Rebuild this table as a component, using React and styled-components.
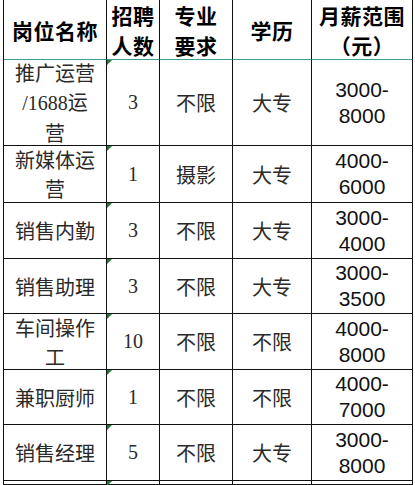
import React from "react";
import styled, { createGlobalStyle } from "styled-components";

// ============ CSS ============== //
const Global = createGlobalStyle`
  html, body {
    margin: 0;
    padding: 0;
    background: #ffffff;
  }
`;

const Sheet = styled.div`
  width: 415px;
  height: 485px;
  overflow: hidden;
  padding-left: 3px;
  box-sizing: border-box;
`;

const Grid = styled.div`
  display: grid;
  grid-template-columns: 103px 53px 73px 79px 101px;
  border-left: 1px solid #111;
  width: 410px;
`;

const Cell = styled.div`
  position: relative;
  box-sizing: border-box;
  height: ${(p) => p.$h}px;
  border-right: 1px solid #111;
  border-bottom: 1px solid ${(p) => (p.$head ? "#3a9e92" : "#111")};
  display: flex;
  flex-direction: column;
  align-items: center;
  justify-content: center;
  text-align: center;
  color: #2a2a2a;
  font-family: "Noto Sans CJK SC", "Noto Sans", sans-serif;
  font-size: 20px;
  line-height: 29px;

  ${(p) =>
    p.$flag &&
    `
    &::before {
      content: "";
      position: absolute;
      top: 0;
      left: 0;
      border-top: 5px solid #1f7a2e;
      border-right: 5px solid transparent;
    }
  `}
`;

const HeadText = styled.span`
  color: #000;
  font-weight: 700;
  font-size: 21px;
  line-height: 30px;
  letter-spacing: 0.5px;
`;

const Count = styled.span`
  font-family: "Liberation Serif", "Noto Sans CJK SC", serif;
  font-size: 20px;
  color: #2a2a2a;
`;

const Pay = styled.span`
  font-family: "Liberation Sans", Arial, sans-serif;
  font-size: 21px;
  line-height: 26px;
  color: #111;
`;

const Tail = styled(Cell)`
  border-bottom: 2px solid #111;
`;

// ============ Data ============== //
const rows = [
  {
    h: 86,
    job: ["推广运营", <><Count>/1688</Count>运</>, "营"],
    num: "3", req: "不限", edu: "大专", pay: ["3000-", "8000"],
  },
  { h: 57, job: ["新媒体运", "营"], num: "1", req: "摄影", edu: "大专", pay: ["4000-", "6000"] },
  { h: 56, job: ["销售内勤"], num: "3", req: "不限", edu: "大专", pay: ["3000-", "4000"] },
  { h: 55, job: ["销售助理"], num: "3", req: "不限", edu: "大专", pay: ["3000-", "3500"] },
  { h: 56, job: ["车间操作", "工"], num: "10", req: "不限", edu: "不限", pay: ["4000-", "8000"] },
  { h: 55, job: ["兼职厨师"], num: "1", req: "不限", edu: "不限", pay: ["4000-", "7000"] },
  { h: 56, job: ["销售经理"], num: "5", req: "不限", edu: "大专", pay: ["3000-", "8000"] },
];

// ============ Function ============== //
const Lines = ({ items, as: As = "span" }) =>
  items.map((t, i) => <As key={i}>{t}</As>);

const App = () => {
  return (
    <Sheet>
      <Global />
      <Grid>
        <Cell $h={60} $head>
          <HeadText>岗位名称</HeadText>
        </Cell>
        <Cell $h={60} $head>
          <HeadText>招聘</HeadText>
          <HeadText>人数</HeadText>
        </Cell>
        <Cell $h={60} $head>
          <HeadText>专业</HeadText>
          <HeadText>要求</HeadText>
        </Cell>
        <Cell $h={60} $head>
          <HeadText>学历</HeadText>
        </Cell>
        <Cell $h={60} $head>
          <HeadText>月薪范围</HeadText>
          <HeadText>（元）</HeadText>
        </Cell>

        {rows.map((r, i) => (
          <React.Fragment key={i}>
            <Cell $h={r.h}>
              <Lines items={r.job} />
            </Cell>
            <Cell $h={r.h} $flag>
              <Count>{r.num}</Count>
            </Cell>
            <Cell $h={r.h}>{r.req}</Cell>
            <Cell $h={r.h}>{r.edu}</Cell>
            <Cell $h={r.h}>
              <Lines items={r.pay} as={Pay} />
            </Cell>
          </React.Fragment>
        ))}

        <Tail $h={5} />
        <Tail $h={5} $flag />
        <Tail $h={5} />
        <Tail $h={5} />
        <Tail $h={5} />
      </Grid>
    </Sheet>
  );
};

export default App;
